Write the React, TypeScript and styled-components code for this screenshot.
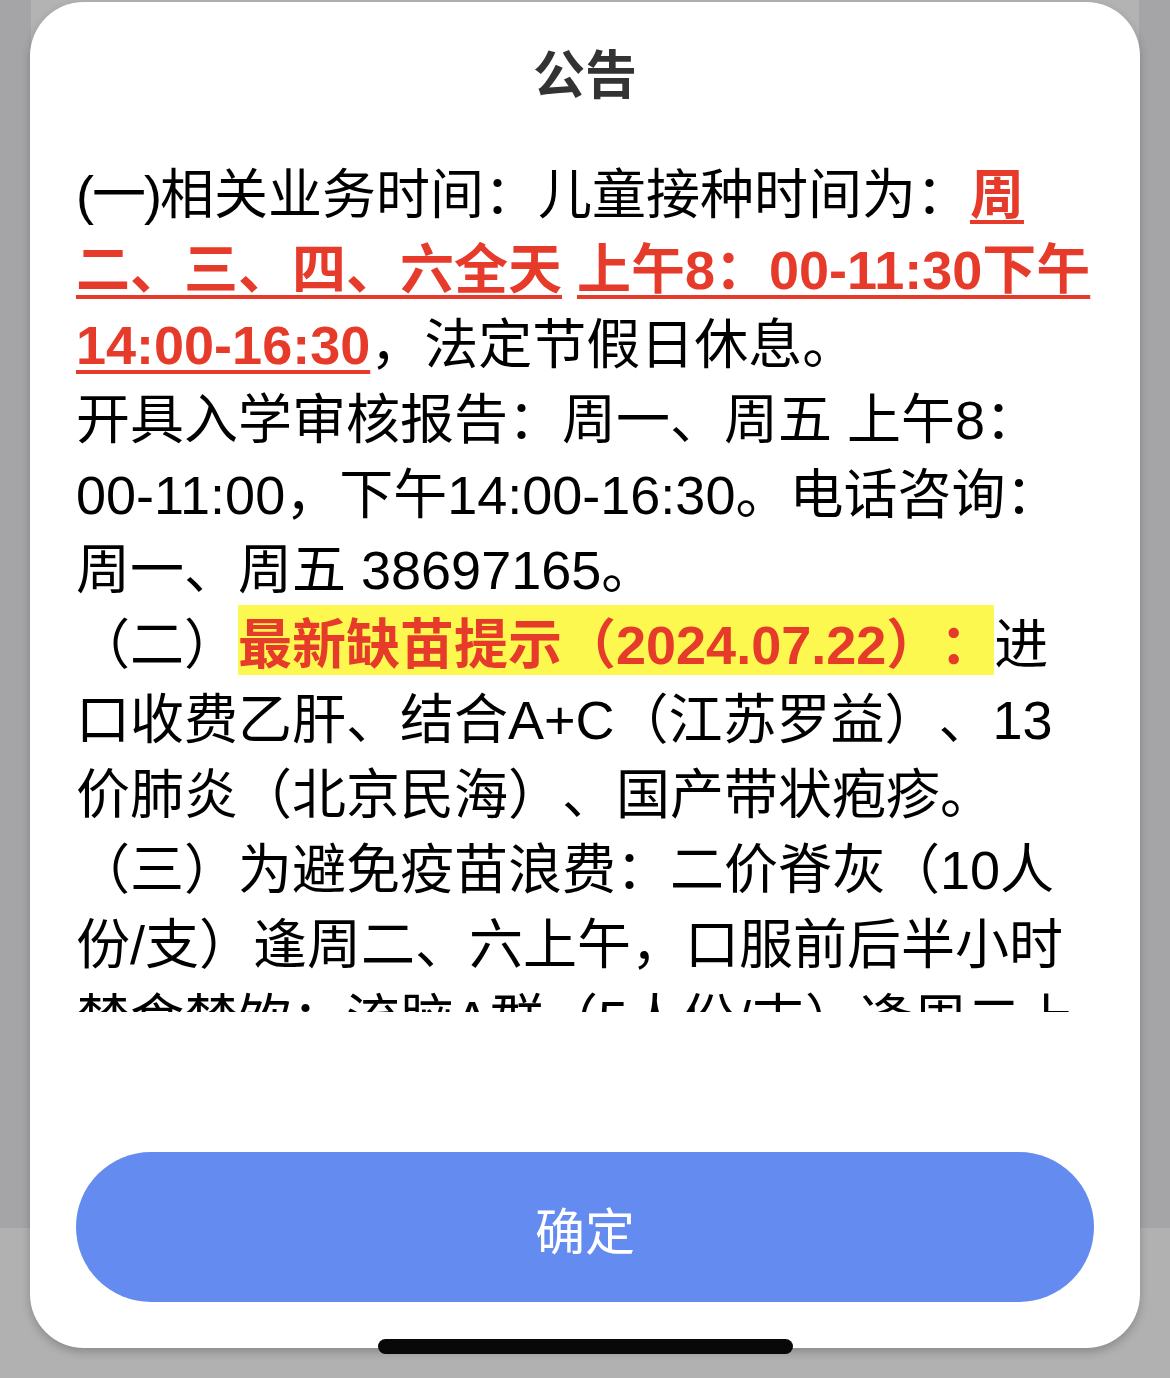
import React from "react";
import styled, { createGlobalStyle } from "styled-components";

const GlobalStyle = createGlobalStyle`
  html, body { margin: 0; padding: 0; background: #b1b1b1; }
  * { box-sizing: border-box; }
`;

const FONT = `"Liberation Sans", "Noto Sans CJK SC", sans-serif`;

const Screen = styled.div`
  position: relative;
  width: 1170px;
  height: 1378px;
  overflow: hidden;
  background: #b1b1b1;
  font-family: ${FONT};
`;

const BackPage = styled.div`
  display: flex;
  height: 1228px;
`;

const SideStrip = styled.div`
  width: 31px;
  background: #a5a5a8;
`;

const CenterPane = styled.div`
  flex: 1;
  background: #b3b3b3;
`;

const Modal = styled.div`
  position: absolute;
  left: 30px;
  top: 2px;
  width: 1110px;
  height: 1346px;
  background: #ffffff;
  border-radius: 54px;
  box-shadow: 0 4px 10px rgba(0, 0, 0, 0.22);
  display: flex;
  flex-direction: column;
  padding: 37px 46px 46px;
`;

const Title = styled.div`
  text-align: center;
  font-size: 52px;
  font-weight: 700;
  line-height: 75px;
  color: #333333;
`;

const Body = styled.div`
  margin-top: 44px;
  height: 854px;
  overflow: hidden;
  font-size: 54px;
  line-height: 75px;
  color: #000000;
  text-spacing-trim: space-all;
`;

const Para = styled.p`
  margin: 0;
`;

const Lead = styled.span`
  letter-spacing: -2px;
`;

const RedU = styled.span`
  color: #e63a2a;
  font-weight: 700;
  text-decoration: underline;
  text-decoration-thickness: 4px;
  text-underline-offset: 6px;
`;

const Highlight = styled.span`
  color: #e63a2a;
  font-weight: 700;
  background: #fcf850;
  padding: 10px 0 0;
`;

const Button = styled.button`
  margin-top: auto;
  height: 150px;
  width: 100%;
  border: none;
  border-radius: 75px;
  background: #648bf0;
  color: #ffffff;
  font-family: ${FONT};
  font-size: 50px;
  line-height: 1;
  padding: 12px 0 0;
`;

const HomeIndicator = styled.div`
  position: absolute;
  left: 378px;
  top: 1339px;
  width: 415px;
  height: 15px;
  border-radius: 8px;
  background: #080808;
`;

export default function App() {
  return (
    <>
      <GlobalStyle />
      <Screen>
        <BackPage>
          <SideStrip />
          <CenterPane />
          <SideStrip />
        </BackPage>
        <Modal>
          <Title>公告</Title>
          <Body>
            <Para>
              <Lead>(一)</Lead>相关业务时间：儿童接种时间为：<RedU>周二、三、四、六全天</RedU>{" "}
              <RedU>上午8：00-11:30下午14:00-16:30</RedU>，法定节假日休息。
            </Para>
            <Para>
              开具入学审核报告：周一、周五 上午8：00-11:00，下午14:00-16:30。电话咨询：周一、周五 38697165。
            </Para>
            <Para>
              （二）<Highlight>最新缺苗提示（2024.07.22）：</Highlight>进口收费乙肝、结合A+C（江苏罗益）、13价肺炎（北京民海）、国产带状疱疹。
            </Para>
            <Para>
              （三）为避免疫苗浪费：二价脊灰（10人份/支）逢周二、六上午，口服前后半小时禁食禁饮；流脑A群（5人份/支）逢周二上午，请家长合理安排接种时间。
            </Para>
          </Body>
          <Button>确定</Button>
        </Modal>
        <HomeIndicator />
      </Screen>
    </>
  );
}
